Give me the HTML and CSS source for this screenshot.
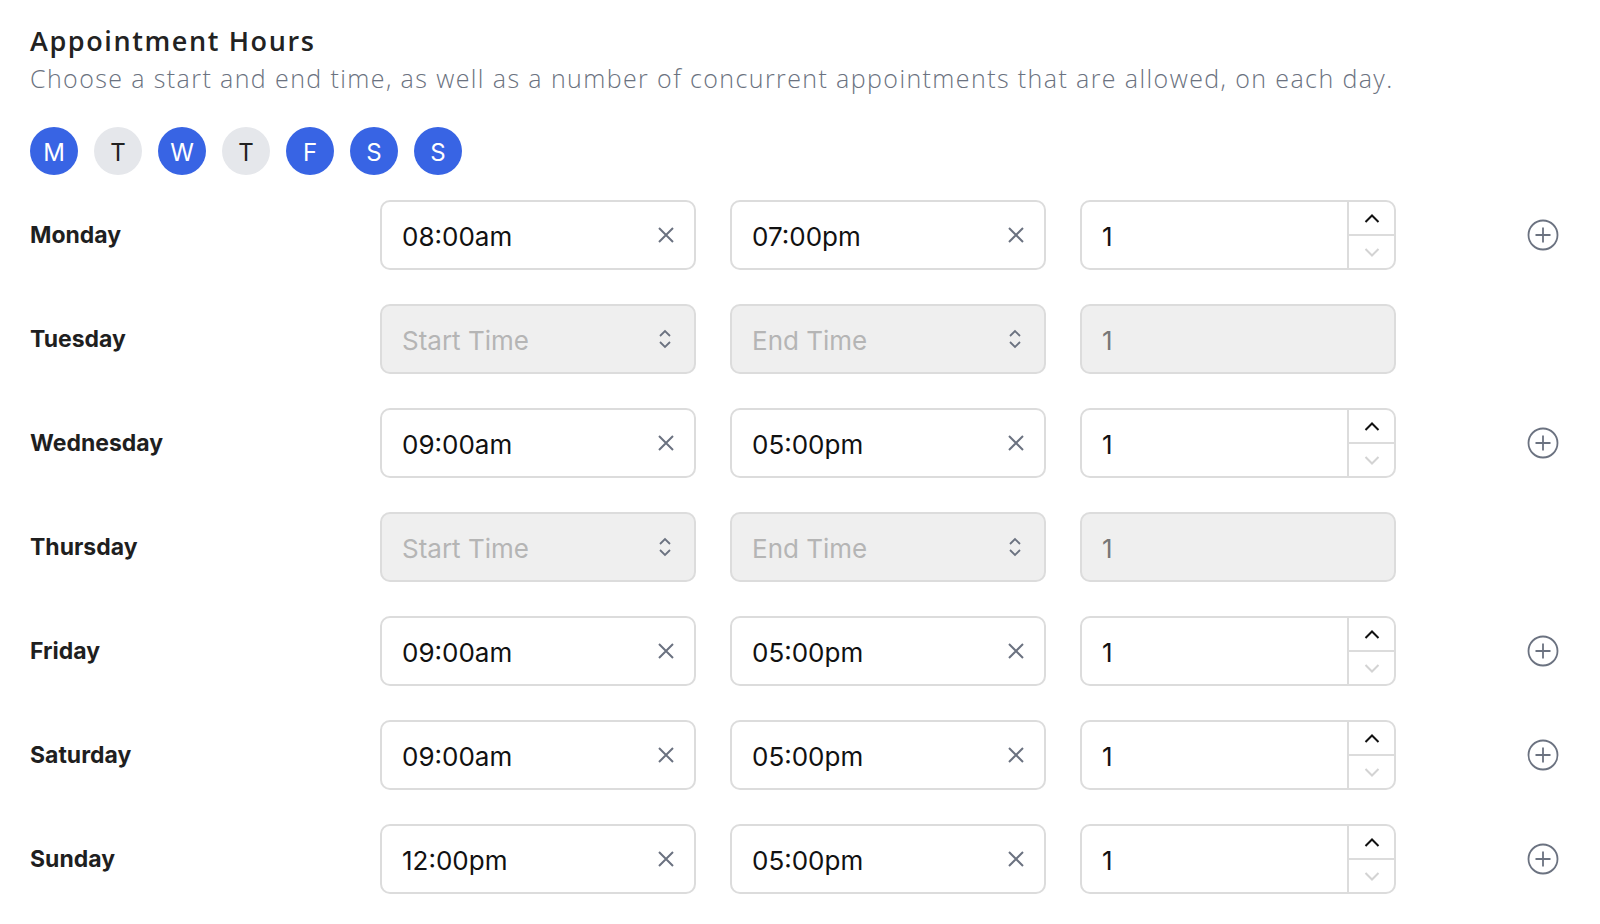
FILE: index.html
```html
<!DOCTYPE html>
<html lang="en">
<head>
    <meta charset="UTF-8">
    <meta name="viewport" content="width=device-width, initial-scale=1.0">
    <title>Appointment Hours</title>
    <link rel="stylesheet" href="styles.css">
</head>
<body>
    <section class="hours">
        <h1>Appointment Hours</h1>
        <p class="hint">Choose a start and end time, as well as a number of concurrent appointments that are allowed, on each day.</p>

        <!-- Day toggles -->
        <div class="days">
            <span class="day on">M</span>
            <span class="day">T</span>
            <span class="day on">W</span>
            <span class="day">T</span>
            <span class="day on">F</span>
            <span class="day on">S</span>
            <span class="day on">S</span>
        </div>

        <div class="rows">
            <div class="row">
                <div class="day-label">Monday</div>
                <div class="field"><span class="value">08:00am</span><svg class="clear" viewBox="0 0 18 18"><path d="M2 2L16 16M16 2L2 16"/></svg></div>
                <div class="field"><span class="value">07:00pm</span><svg class="clear" viewBox="0 0 18 18"><path d="M2 2L16 16M16 2L2 16"/></svg></div>
                <div class="field count"><span class="value">1</span><div class="spin"><span class="up"><svg viewBox="0 0 16 9"><path d="M1.5 8L8 1.5L14.5 8"/></svg></span><span class="down"><svg viewBox="0 0 16 9"><path d="M1.5 1L8 7.5L14.5 1"/></svg></span></div></div>
                <svg class="add" viewBox="0 0 32 32"><circle cx="16" cy="16" r="14.5"/><path d="M16 8.5V23.5M8.5 16H23.5"/></svg>
            </div>

            <div class="row">
                <div class="day-label">Tuesday</div>
                <div class="field off"><span class="placeholder">Start Time</span><svg class="updown" viewBox="0 0 14 22"><path d="M2 8L7 3L12 8M2 14L7 19L12 14"/></svg></div>
                <div class="field off"><span class="placeholder">End Time</span><svg class="updown" viewBox="0 0 14 22"><path d="M2 8L7 3L12 8M2 14L7 19L12 14"/></svg></div>
                <div class="field off"><span class="value">1</span></div>
            </div>

            <div class="row">
                <div class="day-label">Wednesday</div>
                <div class="field"><span class="value">09:00am</span><svg class="clear" viewBox="0 0 18 18"><path d="M2 2L16 16M16 2L2 16"/></svg></div>
                <div class="field"><span class="value">05:00pm</span><svg class="clear" viewBox="0 0 18 18"><path d="M2 2L16 16M16 2L2 16"/></svg></div>
                <div class="field count"><span class="value">1</span><div class="spin"><span class="up"><svg viewBox="0 0 16 9"><path d="M1.5 8L8 1.5L14.5 8"/></svg></span><span class="down"><svg viewBox="0 0 16 9"><path d="M1.5 1L8 7.5L14.5 1"/></svg></span></div></div>
                <svg class="add" viewBox="0 0 32 32"><circle cx="16" cy="16" r="14.5"/><path d="M16 8.5V23.5M8.5 16H23.5"/></svg>
            </div>

            <div class="row">
                <div class="day-label">Thursday</div>
                <div class="field off"><span class="placeholder">Start Time</span><svg class="updown" viewBox="0 0 14 22"><path d="M2 8L7 3L12 8M2 14L7 19L12 14"/></svg></div>
                <div class="field off"><span class="placeholder">End Time</span><svg class="updown" viewBox="0 0 14 22"><path d="M2 8L7 3L12 8M2 14L7 19L12 14"/></svg></div>
                <div class="field off"><span class="value">1</span></div>
            </div>

            <div class="row">
                <div class="day-label">Friday</div>
                <div class="field"><span class="value">09:00am</span><svg class="clear" viewBox="0 0 18 18"><path d="M2 2L16 16M16 2L2 16"/></svg></div>
                <div class="field"><span class="value">05:00pm</span><svg class="clear" viewBox="0 0 18 18"><path d="M2 2L16 16M16 2L2 16"/></svg></div>
                <div class="field count"><span class="value">1</span><div class="spin"><span class="up"><svg viewBox="0 0 16 9"><path d="M1.5 8L8 1.5L14.5 8"/></svg></span><span class="down"><svg viewBox="0 0 16 9"><path d="M1.5 1L8 7.5L14.5 1"/></svg></span></div></div>
                <svg class="add" viewBox="0 0 32 32"><circle cx="16" cy="16" r="14.5"/><path d="M16 8.5V23.5M8.5 16H23.5"/></svg>
            </div>

            <div class="row">
                <div class="day-label">Saturday</div>
                <div class="field"><span class="value">09:00am</span><svg class="clear" viewBox="0 0 18 18"><path d="M2 2L16 16M16 2L2 16"/></svg></div>
                <div class="field"><span class="value">05:00pm</span><svg class="clear" viewBox="0 0 18 18"><path d="M2 2L16 16M16 2L2 16"/></svg></div>
                <div class="field count"><span class="value">1</span><div class="spin"><span class="up"><svg viewBox="0 0 16 9"><path d="M1.5 8L8 1.5L14.5 8"/></svg></span><span class="down"><svg viewBox="0 0 16 9"><path d="M1.5 1L8 7.5L14.5 1"/></svg></span></div></div>
                <svg class="add" viewBox="0 0 32 32"><circle cx="16" cy="16" r="14.5"/><path d="M16 8.5V23.5M8.5 16H23.5"/></svg>
            </div>

            <div class="row">
                <div class="day-label">Sunday</div>
                <div class="field"><span class="value">12:00pm</span><svg class="clear" viewBox="0 0 18 18"><path d="M2 2L16 16M16 2L2 16"/></svg></div>
                <div class="field"><span class="value">05:00pm</span><svg class="clear" viewBox="0 0 18 18"><path d="M2 2L16 16M16 2L2 16"/></svg></div>
                <div class="field count"><span class="value">1</span><div class="spin"><span class="up"><svg viewBox="0 0 16 9"><path d="M1.5 8L8 1.5L14.5 8"/></svg></span><span class="down"><svg viewBox="0 0 16 9"><path d="M1.5 1L8 7.5L14.5 1"/></svg></span></div></div>
                <svg class="add" viewBox="0 0 32 32"><circle cx="16" cy="16" r="14.5"/><path d="M16 8.5V23.5M8.5 16H23.5"/></svg>
            </div>
        </div>
    </section>
</body>
</html>
```

FILE: styles.css
```css
body {
    margin: 0;
    background: #fff;
    font-family: Inter, 'Noto Sans', sans-serif;
    color: #111;
}

.hours {
    padding: 23px 30px 0;
}

h1 {
    font-family: 'Open Sans', sans-serif;
    font-size: 27px;
    font-weight: 600;
    line-height: 36px;
    letter-spacing: 1.6px;
    color: #222;
    margin: 0 0 3px;
}

.hint {
    font-family: 'Open Sans', sans-serif;
    font-size: 25px;
    font-weight: 300;
    line-height: 32px;
    letter-spacing: 1.4px;
    color: #6b7280;
    margin: 0 0 33px;
}

.days {
    display: flex;
    gap: 16px;
    margin-bottom: 25px;
}

.day {
    width: 48px;
    height: 48px;
    border-radius: 50%;
    background: #e5e7eb;
    color: #222;
    font-size: 24px;
    display: flex;
    align-items: center;
    justify-content: center;
    padding-top: 2px;
    box-sizing: border-box;
}

.day.on {
    background: #3864e4;
    color: #fff;
}

.rows {
    display: flex;
    flex-direction: column;
    gap: 34px;
}

.row {
    display: flex;
    align-items: center;
    gap: 34px;
    height: 70px;
}

.day-label {
    width: 316px;
    font-size: 23px;
    font-weight: 700;
    color: #1f1f1f;
}

.field {
    width: 316px;
    height: 70px;
    box-sizing: border-box;
    border: 2px solid #dcdcdc;
    border-radius: 10px;
    background: #fff;
    display: flex;
    align-items: center;
    justify-content: space-between;
    padding: 0 19px 0 20px;
    font-size: 26px;
}

.field .value {
    padding-top: 2px;
}

.field.off {
    background: #efefef;
}

.field.off .value {
    color: #777;
}

.placeholder {
    color: #b5b5b5;
    padding-top: 2px;
}

.clear {
    width: 18px;
    height: 18px;
    fill: none;
    stroke: #6b7280;
    stroke-width: 2;
}

.updown {
    width: 14px;
    height: 22px;
    fill: none;
    stroke: #6b7280;
    stroke-width: 1.8;
    margin-right: 3px;
}

.field.count {
    padding-right: 0;
}

.spin {
    width: 45px;
    align-self: stretch;
    border-left: 2px solid #dcdcdc;
    display: flex;
    flex-direction: column;
}

.spin span {
    flex: 1;
    display: flex;
    align-items: center;
    justify-content: center;
}

.spin .up {
    border-bottom: 2px solid #dcdcdc;
}

.spin svg {
    width: 16px;
    height: 9px;
    fill: none;
    stroke-width: 2;
}

.spin .up svg {
    stroke: #111;
}

.spin .down svg {
    stroke: #d3d3d3;
}

.add {
    width: 32px;
    height: 32px;
    margin-left: 97px;
    fill: none;
    stroke: #6b7280;
    stroke-width: 1.8;
}
```
